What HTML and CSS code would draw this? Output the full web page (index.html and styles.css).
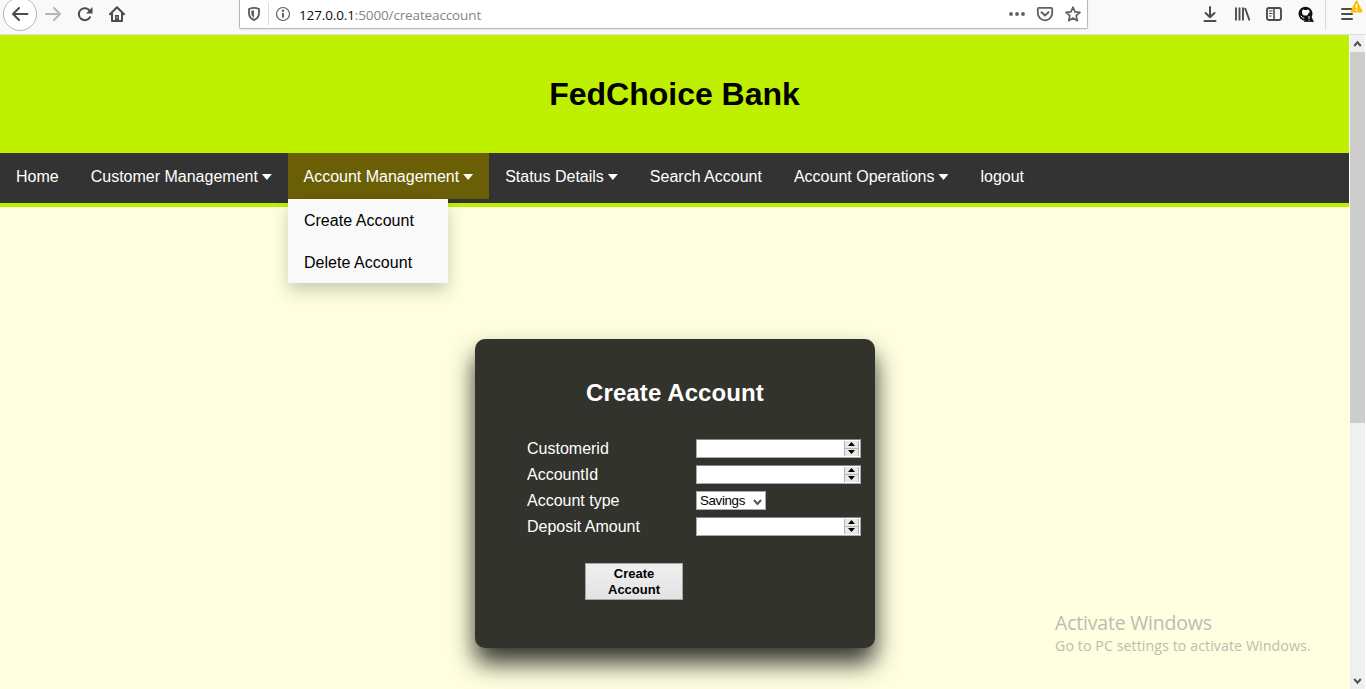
FILE: index.html
```html
<!DOCTYPE html>
<html lang="en">
<head>
<meta charset="utf-8">
<title>FedChoice Bank</title>
<link rel="stylesheet" href="styles.css">
</head>
<body>
<div class="toolbar">
  <div class="nav-buttons">
    <svg class="back" width="36" height="34" viewBox="0 0 36 34"><circle cx="18" cy="14" r="16.500" fill="#fff" stroke="#b4b4b6"/><path d="M25.500 14H11M17 8l-6 6 6 6" fill="none" stroke="#4c4c4f" stroke-width="2" stroke-linecap="round" stroke-linejoin="round"/></svg>
    <svg class="forward" width="18" height="18" viewBox="0 0 18 18"><path d="M2 9h14M10 3l6 6-6 6" fill="none" stroke="#b6b6b8" stroke-width="2" stroke-linecap="round" stroke-linejoin="round"/></svg>
    <svg width="16" height="16" viewBox="0 0 16 16"><path d="M13 11.200A6 6 0 1 1 12.600 4.500" fill="none" stroke="#4c4c4f" stroke-width="2" stroke-linecap="round"/><path d="M15.500 1v6.500H9z" fill="#4c4c4f"/></svg>
    <svg width="16" height="16" viewBox="0 0 16 16"><path d="M1 8.300L8 1.200l7 7.100M3 7.500V15h10V7.500" fill="none" stroke="#4c4c4f" stroke-width="2" stroke-linecap="round" stroke-linejoin="round"/><path d="M6 9h4v6H6z" fill="#4c4c4f"/><path d="M8 10.500v2" stroke="#ddd" stroke-width="1"/></svg>
  </div>
  <div class="address">
    <svg width="14" height="16" viewBox="0 0 14 16"><path d="M2 3Q7 0.800 12 3v4c0 3-1.600 5.600-5 7-3.400-1.400-5-4-5-7z" fill="none" stroke="#606063" stroke-width="1.900"/><path d="M7 4.200v7.600C5.200 10.700 4.300 9 4.300 7V4.700z" fill="#606063"/></svg>
    <span class="divider"></span>
    <svg class="info" width="16" height="16" viewBox="0 0 16 16"><circle cx="8" cy="8" r="6.500" fill="none" stroke="#606063" stroke-width="1.200"/><path d="M8 7v4.500" stroke="#606063" stroke-width="2"/><circle cx="8" cy="4.800" r="1.200" fill="#606063"/></svg>
    <span class="url"><b>127.0.0.1</b>:5000/createaccount</span>
    <span class="address-actions">
      <svg width="18" height="16" viewBox="0 0 18 16"><g fill="#606063"><circle cx="3" cy="8" r="1.900"/><circle cx="9" cy="8" r="1.900"/><circle cx="15" cy="8" r="1.900"/></g></svg>
      <svg width="18" height="16" viewBox="0 0 18 16"><path d="M3 1.900h12q1.200 0 1.200 1.200v4a7.200 7.200 0 0 1-14.400 0v-4Q1.800 1.900 3 1.900z" fill="none" stroke="#606063" stroke-width="1.800"/><path d="M5.500 6.200L9 9.500l3.500-3.300" fill="none" stroke="#606063" stroke-width="2" stroke-linecap="round" stroke-linejoin="round"/></svg>
      <svg class="star" width="16" height="16" viewBox="0 0 16 16"><path d="M8 1.200l2 4.600 5 .500-3.800 3.400 1.100 5L8 12.100l-4.300 2.600 1.100-5L1 6.300l5-.500z" fill="none" stroke="#606063" stroke-width="1.700" stroke-linejoin="round"/></svg>
    </span>
  </div>
  <div class="tools">
    <svg width="16" height="16" viewBox="0 0 16 16"><path d="M8 1v10M3.500 7L8 11.300 12.500 7M2.500 15h11" fill="none" stroke="#4c4c4f" stroke-width="2" stroke-linecap="round" stroke-linejoin="round"/></svg>
    <svg width="16" height="16" viewBox="0 0 16 16"><path d="M2 1.500v13M5.500 1.500v13M9 1.500v13M11 2l4.500 12.500" fill="none" stroke="#4c4c4f" stroke-width="1.900"/></svg>
    <svg width="16" height="16" viewBox="0 0 16 16"><rect x="1" y="2" width="14" height="12" rx="2" fill="none" stroke="#4c4c4f" stroke-width="1.900"/><path d="M8 2v12" stroke="#4c4c4f" stroke-width="1.600"/><path d="M3 5h3.500M3 7.500h3.500M3 10h2.500" stroke="#4c4c4f"/></svg>
    <svg width="16" height="16" viewBox="0 0 16 16"><circle cx="7.500" cy="7.700" r="7" fill="#111"/><path d="M4 6.500Q4 3 5.500 3.600l1 .4h2l1.500-.6Q12 4 11.500 6.500L9.500 9.500H6.500Q4 9 4 6.500z" fill="#f9f9fa"/><path d="M2.800 9.800l1.500 1.500q.5 1 2 .8" fill="none" stroke="#f9f9fa"/><path d="M11 7l4.700 8.800H6.300z" fill="#111" stroke="#111" stroke-width=".6" stroke-linejoin="round"/><path d="M11 10v2.800M11 13.700v1" stroke="#fff"/></svg>
    <span class="tool-divider"></span>
    <span class="menu">
      <svg width="16" height="16" viewBox="0 0 16 16"><path d="M2 3h10M2 8h10M2 13h10" stroke="#4c4c4f" stroke-width="2" stroke-linecap="round"/></svg>
      <svg class="warning" width="13" height="13" viewBox="0 0 13 13"><path d="M6.500 1.500L11.500 11.500H1.500z" fill="#ffbf00" stroke="#ffbf00" stroke-width="2" stroke-linejoin="round"/><path d="M6.500 4v4.500M6.500 9.600v1.500" stroke="#fff" stroke-width="1.500"/></svg>
    </span>
  </div>
</div>
<div class="viewport">
  <div class="page">
    <header class="banner"><h1>FedChoice Bank</h1></header>
    <nav class="navbar">
      <a>Home</a>
      <a>Customer Management<i class="caret"></i></a>
      <div class="dropdown">
        <a class="active">Account Management<i class="caret"></i></a>
        <div class="dropdown-content"><a>Create Account</a><a>Delete Account</a></div>
      </div>
      <a>Status Details<i class="caret"></i></a>
      <a>Search Account</a>
      <a>Account Operations<i class="caret"></i></a>
      <a>logout</a>
    </nav>
    <main class="content">
      <form class="card">
        <h2>Create Account</h2>
        <div class="fields">
          <label>Customerid</label><span class="number"><span class="spin"><i class="up"></i><i class="down"></i></span></span>
          <label>AccountId</label><span class="number"><span class="spin"><i class="up"></i><i class="down"></i></span></span>
          <label>Account type</label><span class="select">Savings<svg width="9" height="7" viewBox="0 0 9 7"><path d="M1 1l3.500 4L8 1" fill="none" stroke="#555" stroke-width="1.900"/></svg></span>
          <label>Deposit Amount</label><span class="number"><span class="spin"><i class="up"></i><i class="down"></i></span></span>
        </div>
        <button type="button" class="submit">Create<br>Account</button>
      </form>
    </main>
  </div>
  <div class="scrollbar">
    <svg width="15" height="17" viewBox="0 0 15 17"><path d="M4.200 11L7.500 7.300 10.800 11" fill="none" stroke="#505050" stroke-width="2"/></svg>
    <span class="thumb"></span>
    <svg width="15" height="17" viewBox="0 0 15 17"><path d="M4.200 7L7.500 10.700 10.800 7" fill="none" stroke="#505050" stroke-width="2"/></svg>
  </div>
</div>
<div class="watermark"><p class="watermark-title">Activate Windows</p><p class="watermark-note">Go to PC settings to activate Windows.</p></div>
</body>
</html>
```
FILE: styles.css
```css
* { box-sizing: border-box; }
body {
  margin: 0;
  height: 689px;
  overflow: hidden;
  display: flex;
  flex-direction: column;
  font-family: "Liberation Sans", Arial, sans-serif;
  font-size: 16px;
  color: #000;
}
svg { display: block; flex: none; }

/* Browser toolbar */
.toolbar {
  height: 35px;
  flex: none;
  display: flex;
  align-items: flex-start;
  background: #f9f9fa;
  border-bottom: 1px solid #dedee0;
}
.nav-buttons { width: 239px; padding-left: 2px; display: flex; align-items: center; height: 28px; }
.nav-buttons svg { margin-right: 16px; }
.nav-buttons .back { margin: 6px 6px 0 0; }
.nav-buttons .forward { margin-right: 15px; }
.address {
  width: 849px;
  height: 29px;
  padding: 0 6px 0 7px;
  display: flex;
  align-items: center;
  background: #fff;
  border: 1px solid #b8b8ba;
  border-top: 0;
  border-radius: 0 0 2px 2px;
  box-shadow: 0 1px 2px rgba(0, 0, 0, .08);
}
.divider { width: 1px; height: 22px; margin: 0 6px 0 7px; background: #dcdcde; }
.url {
  margin-left: 8px;
  padding-top: 1px;
  font: 13.5px "Open Sans", "Noto Sans", sans-serif;
  letter-spacing: -.13px;
  color: #858587;
}
.url b { font-weight: 400; color: #0c0c0d; }
.address-actions { margin-left: auto; display: flex; gap: 10px; }
.address-actions .star { margin-left: 1px; }
.tools { display: flex; align-items: center; gap: 16px; height: 28px; margin-left: 114px; }
.tool-divider { width: 1px; height: 30px; margin: 2px -3px 0 -5px; background: #d9d9db; }
.menu { position: relative; margin-left: 1px; }
.warning { position: absolute; left: 10px; top: -6px; }

/* Page area and scrollbar */
.viewport { flex: 1; display: flex; min-height: 0; background: #fff; }
.page { width: 1349px; background: #ffffe0; }
.banner { height: 118px; background: #bff000; text-align: center; overflow: hidden; }
.banner h1 { margin: 40px 0 0; font-size: 32px; line-height: 38px; }
.navbar {
  height: 54px;
  display: flex;
  align-items: flex-start;
  background: #333;
  border-bottom: 4px solid #bff000;
}
.navbar a { display: flex; align-items: center; padding: 15px 16px 13px; line-height: 18px; color: #fff; white-space: nowrap; }
.navbar .active { background: #6a5f06; padding-left: 15.6px; }
.caret {
  width: 10px;
  height: 6px;
  margin-left: 4px;
  background: #fff;
  clip-path: polygon(0 0, 100% 0, 50% 100%);
}
.dropdown { position: relative; }
.dropdown-content {
  position: absolute;
  top: 100%;
  left: 0;
  width: 160px;
  background: #f9f9f9;
  box-shadow: 0 8px 16px rgba(0, 0, 0, .2);
}
.navbar .dropdown-content a { padding: 13px 16px 11px; color: #000; letter-spacing: .05px; }
.content { padding-top: 132px; }
.card {
  width: 400px;
  height: 309px;
  margin-left: 475px;
  padding: 40px 14px 0 52px;
  border-radius: 10px;
  background: #33332d;
  color: #fff;
  box-shadow: 0 15px 25px rgba(0, 0, 0, .8);
}
.card h2 { margin: 0 38px 28px 0; font-size: 24px; line-height: 28px; letter-spacing: .1px; text-align: center; }
.fields { display: grid; grid-template-columns: 169px 165px; grid-auto-rows: 26px; align-items: center; }
.fields label { padding-top: 2px; line-height: 18px; }
.number {
  height: 19px;
  padding: 1px;
  display: flex;
  justify-content: flex-end;
  background: #fff;
  border: 1px solid #a9a9b2;
  border-top-color: #85858c;
}
.spin { width: 15px; display: grid; grid-template-rows: 7px 7px; gap: 1px; background: #b4b4b4; border: 1px solid #b4b4b4; border-width: 0 1px; }
.spin i { background: #e8e8e8; display: flex; align-items: center; justify-content: center; }
.spin i::before { content: ""; width: 7px; height: 4px; background: #000; }
.spin .up::before { clip-path: polygon(50% 0, 100% 100%, 0 100%); }
.spin .down::before { clip-path: polygon(0 0, 100% 0, 50% 100%); }
.select {
  width: 70px;
  height: 19px;
  padding: 0 3px;
  display: flex;
  align-items: center;
  justify-content: space-between;
  background: #fff;
  border: 1px solid #a9a9b2;
  color: #000;
  font-size: 13.33px;
  letter-spacing: -.35px;
}
.select svg { margin-top: 4px; }
.submit {
  display: block;
  width: 98px;
  height: 37px;
  margin: 24px 0 0 58px;
  padding: 0;
  border: 1px solid #a6a6a6;
  background: linear-gradient(#efefef, #e3e3e3);
  color: #000;
  font: bold 13px/16px "Liberation Sans", Arial, sans-serif;
}
.scrollbar { width: 15px; margin-left: 1px; display: flex; flex-direction: column; background: #f0f0f0; }
.thumb { height: 371px; margin-bottom: auto; background: #cdcdcd; }

/* System overlay in the lower right corner */
.watermark { position: absolute; left: 1055px; top: 610px; color: #bcbdb0; font-family: "Open Sans", "Noto Sans", sans-serif; white-space: nowrap; }
.watermark p { margin: 0; }
.watermark-title { font-size: 19.5px; line-height: 26px; letter-spacing: -.2px; }
.watermark-note { font-size: 14.2px; line-height: 20px; letter-spacing: .08px; }
```
